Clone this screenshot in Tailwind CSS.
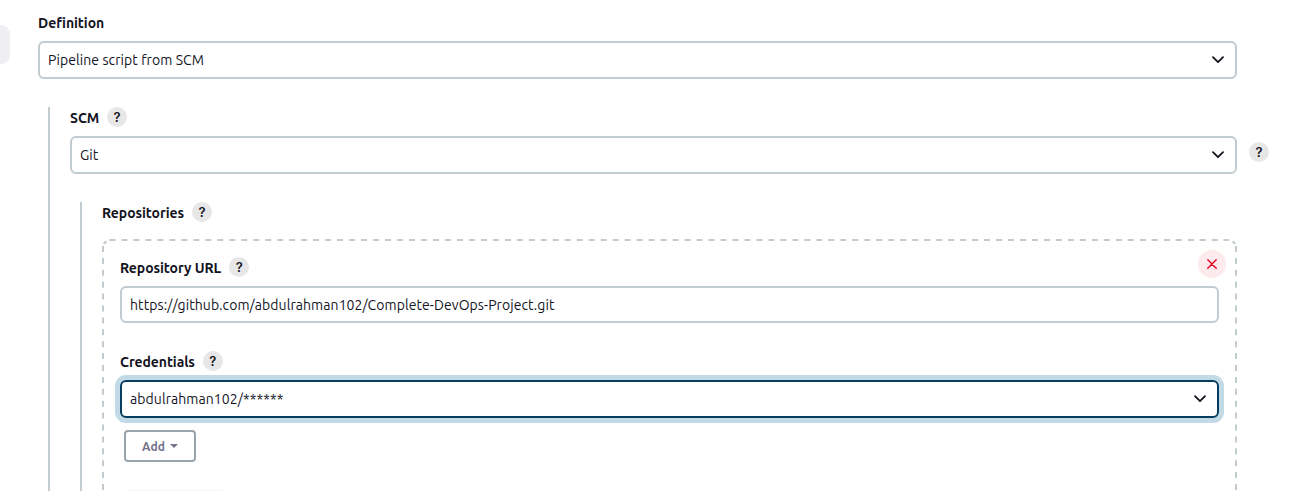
<!DOCTYPE html>
<html lang="en">
<head>
<meta charset="utf-8">
<title>Pipeline</title>
<script src="https://cdn.jsdelivr.net/npm/@tailwindcss/browser@4"></script>
</head>
<body class="relative h-[491px] overflow-hidden bg-white font-['Ubuntu','Noto_Sans',sans-serif] text-[14px] leading-5 text-[#14141f]">
<div class="absolute left-0 top-[25px] h-[39px] w-[10px] rounded-r-[9px] bg-[#eeeef3]"></div>
<main class="pl-[38px] pr-[79px] pt-[13px]">
  <div class="flex h-5 items-center font-semibold"><span class="tracking-[-0.07px]">Definition</span></div>
  <div class="mt-2 flex h-[38px] items-center justify-between rounded-[6px] border-2 border-[#c1cbd0] pl-2 pr-[10px]">
    <span class="tracking-[0.08px]">Pipeline script from SCM</span>
    <svg class="h-[8px] w-[14px]" viewBox="0 0 14 8" fill="none" stroke="#14141f" stroke-width="1.8" stroke-linecap="round" stroke-linejoin="round"><path d="M2 1.2 7 6.2 12 1.2"/></svg>
  </div>
  <section class="ml-[10px] mt-7 h-[400px] border-l-2 border-[#c1cbd0] pl-5">
    <div class="flex h-5 items-center gap-2 font-semibold"><span class="relative top-px tracking-[-0.07px]">SCM</span><span class="flex size-5 items-center justify-center rounded-full bg-[#e7e7e8] font-['Inter'] text-[13px]">?</span></div>
    <div class="relative mt-[9px] flex h-[38px] items-center justify-between rounded-[6px] border-2 border-[#c1cbd0] pl-2 pr-[10px]">
      <span class="tracking-[0.08px]">Git</span>
      <svg class="h-[8px] w-[14px]" viewBox="0 0 14 8" fill="none" stroke="#14141f" stroke-width="1.8" stroke-linecap="round" stroke-linejoin="round"><path d="M2 1.2 7 6.2 12 1.2"/></svg>
      <span class="absolute -right-[34px] top-1 flex size-5 items-center justify-center rounded-full bg-[#e7e7e8] font-['Inter'] text-[13px] font-semibold">?</span>
    </div>
    <section class="ml-[10px] mt-7 h-[300px] border-l-2 border-[#c1cbd0] pl-5">
      <div class="flex h-5 items-center gap-2 font-semibold"><span class="relative top-px tracking-[-0.07px]">Repositories</span><span class="flex size-5 items-center justify-center rounded-full bg-[#e7e7e8] font-['Inter'] text-[13px]">?</span></div>
      <div class="relative mt-[17px] h-[252px] px-[18px] pt-[18px]">
        <svg class="absolute left-0 top-0" width="1135" height="252" fill="none" stroke="#c1cbd0" stroke-width="2">
          <path d="M7.500 1H1127" stroke-dasharray="6 5.98"/>
          <path d="M1 7V252M1134 7V252" stroke-dasharray="6 5.9"/>
          <path d="M2 5Q2.500 3.500 4.500 2.500M1133 5Q1132.500 3.500 1130.500 2.500"/>
        </svg>
        <span class="absolute right-[11px] top-[11px] flex size-7 items-center justify-center rounded-full bg-[#fdeaec]">
          <svg class="size-[10px]" viewBox="0 0 10 10" fill="none" stroke="#e6001f" stroke-width="1.4" stroke-linecap="round"><path d="M.8.8 9.200 9.200M9.200.8.8 9.200"/></svg>
        </span>
        <div class="flex h-5 items-center gap-2 font-semibold"><span class="relative top-px tracking-[-0.07px]">Repository URL</span><span class="flex size-5 items-center justify-center rounded-full bg-[#e7e7e8] font-['Inter'] text-[13px]">?</span></div>
        <div class="mt-[9px] flex h-[37px] items-center rounded-[6px] border-2 border-[#c1cbd0] px-2"><span class="tracking-[0.08px]">https://github.com/abdulrahman102/Complete-DevOps-Project.git</span></div>
        <div class="mt-7 flex h-5 items-center gap-2 font-semibold"><span class="relative top-px tracking-[-0.07px]">Credentials</span><span class="flex size-5 items-center justify-center rounded-full bg-[#e7e7e8] font-['Inter'] text-[13px]">?</span></div>
        <div class="mt-[9px] flex h-[38px] items-center justify-between rounded-[6px] border-2 border-[#063d61] pl-2 pr-[10px] shadow-[0_0_0_5px_#c2d9e6]">
          <span class="tracking-[0.08px]">abdulrahman102/******</span>
          <svg class="h-[8px] w-[14px]" viewBox="0 0 14 8" fill="none" stroke="#14141f" stroke-width="1.8" stroke-linecap="round" stroke-linejoin="round"><path d="M2 1.2 7 6.2 12 1.2"/></svg>
        </div>
        <div class="ml-1 mt-3 flex h-8 w-[72px] items-center gap-[5px] rounded-[4px] border-2 border-[#98a5ad] pl-4 text-[12px] font-bold text-[#73738c]"><span class="relative top-px tracking-[0.1px]">Add</span><svg width="8" height="4" viewBox="0 0 8 4" fill="#73738c"><path d="M0 0H8L4 4Z"/></svg></div>
        <div class="ml-2 mt-7 h-px w-[94px] bg-[#f5f5f5]"></div>
      </div>
    </section>
  </section>
</main>
</body>
</html>
